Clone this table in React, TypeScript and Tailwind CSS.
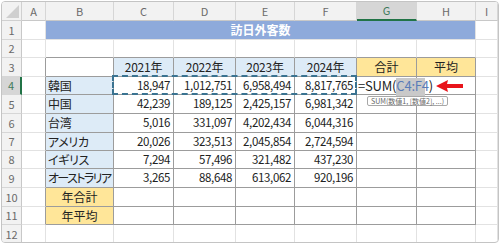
import React from 'react';

const cols = ['A', 'B', 'C', 'D', 'E', 'F', 'G', 'H', 'I'];

const data = [
  ['韓国', '18,947', '1,012,751', '6,958,494', '8,817,765'],
  ['中国', '42,239', '189,125', '2,425,157', '6,981,342'],
  ['台湾', '5,016', '331,097', '4,202,434', '6,044,316'],
  ['アメリカ', '20,026', '323,513', '2,045,854', '2,724,594'],
  ['イギリス', '7,294', '57,496', '321,482', '437,230'],
  ['オーストラリア', '3,265', '88,648', '613,062', '920,196'],
];

function Cell({ r, c, className = '', children }: { r: number; c: number; className?: string; children?: React.ReactNode }) {
  const inTable = r >= 3 && r <= 11 && c >= 1 && c <= 7;
  const darkRight = inTable || (c === 0 && r >= 3 && r <= 11);
  const darkBottom = inTable || (r === 2 && c >= 1 && c <= 7);
  return (
    <div
      className={`border-r border-b min-w-0 ${darkRight ? 'border-r-[#9c9c9c]' : 'border-r-[#e2e2e2]'} ${
        darkBottom ? 'border-b-[#9c9c9c]' : 'border-b-[#e2e2e2]'
      } ${className}`}
    >
      {children}
    </div>
  );
}

function RowCells({ r }: { r: number }) {
  // row 1: merged title
  if (r === 1) {
    return (
      <>
        <Cell r={1} c={0} />
        <div className="col-span-7 bg-[#8eaadb] border-b border-b-[#e2e2e2] border-r border-r-[#e2e2e2] flex items-center justify-center text-white font-bold text-[12px]">
          訪日外客数
        </div>
        <Cell r={1} c={8} />
      </>
    );
  }
  if (r === 3) {
    return (
      <>
        <Cell r={3} c={0} />
        <Cell r={3} c={1} />
        {['2021年', '2022年', '2023年', '2024年'].map((y, i) => (
          <Cell key={y} r={3} c={2 + i} className="bg-[#ddebf7] flex items-center justify-center tracking-[-0.2px]">
            {y}
          </Cell>
        ))}
        <Cell r={3} c={6} className="bg-[#ffe699] flex items-center justify-center">合計</Cell>
        <Cell r={3} c={7} className="bg-[#ffe699] flex items-center justify-center">平均</Cell>
        <Cell r={3} c={8} />
      </>
    );
  }
  if (r >= 4 && r <= 9) {
    const row = data[r - 4];
    return (
      <>
        <Cell r={r} c={0} />
        <Cell
          r={r}
          c={1}
          className={`bg-[#ddebf7] flex items-center pl-[2px] whitespace-nowrap ${r === 9 ? 'tracking-[-1.6px]' : 'tracking-[-0.3px]'}`}
        >
          {row[0]}
        </Cell>
        {row.slice(1).map((v, i) => (
          <Cell
            key={i}
            r={r}
            c={2 + i}
            className={`flex items-center justify-end pr-[3px] text-[11.5px] tracking-[-0.35px] ${r === 4 && i === 0 ? 'relative' : ''}`}
          >
            {v}
            {r === 4 && i === 0 && (
              <div className="absolute -left-[2px] -top-[2px] w-[245px] h-[calc(100%+3px)] border-2 border-dashed border-[#3a7391] pointer-events-none z-10" />
            )}
          </Cell>
        ))}
        <Cell r={r} c={6} className={r === 4 ? 'relative' : ''}>
          {r === 4 && <FormulaEditor />}
        </Cell>
        <Cell r={r} c={7} />
        <Cell r={r} c={8} />
      </>
    );
  }
  if (r === 10 || r === 11) {
    return (
      <>
        <Cell r={r} c={0} />
        <Cell r={r} c={1} className="bg-[#ffe699] flex items-center justify-center">
          {r === 10 ? '年合計' : '年平均'}
        </Cell>
        {[2, 3, 4, 5, 6, 7].map((c) => (
          <Cell key={c} r={r} c={c} />
        ))}
        <Cell r={r} c={8} />
      </>
    );
  }
  return (
    <>
      {cols.map((_, c) => (
        <Cell key={c} r={r} c={c} />
      ))}
    </>
  );
}

function FormulaEditor() {
  return (
    <div className="absolute left-0 top-0 h-full z-20">
      <div className="absolute left-[39px] top-[1px] w-[29px] h-[19px] bg-[#c9c9c9]" />
      <span className="relative flex items-center h-full pl-[1px] whitespace-nowrap text-[13px] tracking-[-0.2px] text-[#222]">
        =SUM(<span className="text-[#5a7cb8]">C4:F4</span>)
      </span>
      <div className="absolute left-[10px] top-[19px] h-[10px] px-[3px] rounded-[2px] border border-[#a8a8a8] bg-white text-[7px] leading-[8px] text-[#666] whitespace-nowrap">
        SUM(数値1, [数値2], ...)
      </div>
      <svg className="absolute left-[79px] top-[2px]" width="28" height="14" viewBox="0 0 28 14">
        <polygon points="0,7 12,1 11,5 27,5 27,9 11,9 12,13" fill="#e8141b" />
      </svg>
    </div>
  );
}

export default function App() {
  const rows = Array.from({ length: 12 }, (_, i) => i + 1);
  return (
    <div className="w-[500px] h-[244px] bg-white p-px [font-family:'Noto_Sans_CJK_JP',sans-serif] [font-feature-settings:'palt'] text-[12px] text-[#222]">
      <div className="w-[498px] h-[242px] border border-[#c4c4c4] rounded-[4px] overflow-hidden">
        <div className="grid grid-cols-[20px_24px_68px_60px_62px_59px_62px_60px_59px_1fr] grid-rows-[19px_19px_18px_19px_18px_19px_19px_18px_18px_19px_19px_18px_19px]">
          {/* column headers */}
          <div className="relative bg-[#f2f2f2] border-r border-b border-[#d0d0d0]">
            <svg className="absolute right-[2px] bottom-[2px]" width="13" height="13" viewBox="0 0 13 13">
              <polygon points="13,0 13,13 0,13" fill="#cfcfcf" />
            </svg>
          </div>
          {cols.map((l) => (
            <div
              key={l}
              className={`flex items-center justify-center text-[11px] border-r border-r-[#d6d6d6] ${
                l === 'G'
                  ? 'bg-[#d6d6d6] text-[#3f7a5c] border-b-2 border-b-[#217346]'
                  : 'bg-[#f2f2f2] text-[#6a6a6a] border-b border-b-[#c8c8c8]'
              }`}
            >
              {l}
            </div>
          ))}
          {rows.map((r) => (
            <React.Fragment key={r}>
              <div
                className={`flex items-center justify-center text-[11px] border-b border-b-[#d6d6d6] ${
                  r === 4
                    ? 'bg-[#d6d6d6] text-[#3f7a5c] border-r-2 border-r-[#217346]'
                    : 'bg-[#f2f2f2] text-[#6a6a6a] border-r border-r-[#c8c8c8]'
                }`}
              >
                {r}
              </div>
              <RowCells r={r} />
            </React.Fragment>
          ))}
        </div>
      </div>
    </div>
  );
}
